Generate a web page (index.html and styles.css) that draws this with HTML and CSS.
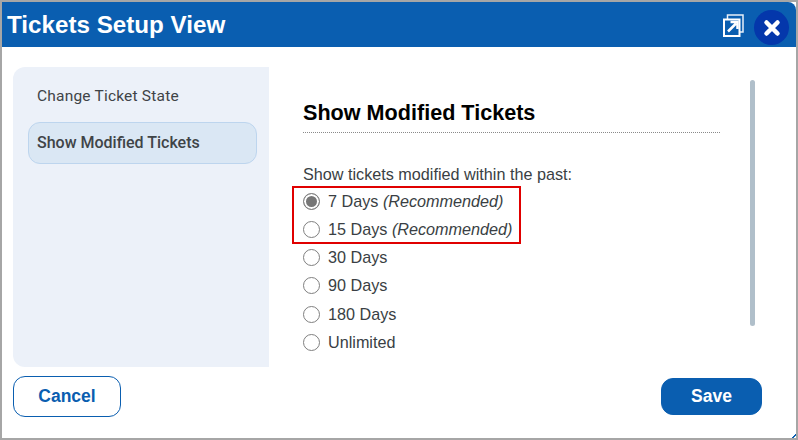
FILE: index.html
```html
<!DOCTYPE html>
<html lang="en">
  <head>
    <meta charset="UTF-8" />
    <meta name="viewport" content="width=device-width, initial-scale=1.0" />
    <link rel="stylesheet" href="styles.css">
    <title>Tickets Setup View</title>
  </head>
  <body>
    <div class="dialog">
      <!-- title bar -->
      <div class="dialog-header">
        <h1>Tickets Setup View</h1>
        <svg class="popout-icon" width="22" height="23" viewBox="0 0 22 23">
          <rect x="5.500" y="1" width="15.500" height="17" fill="none" stroke="#e8f0f8" stroke-width="1.500"/>
          <rect x="2" y="5.500" width="15.500" height="16.500" fill="#0a5eb0" stroke="#fff" stroke-width="2"/>
          <path d="M6 17.500L14 9.500M8.500 8H15.500V15" fill="none" stroke="#fff" stroke-width="2.500"/>
        </svg>
        <button class="close-btn">
          <svg width="18" height="18" viewBox="0 0 18 18">
            <path d="M3.500 3.500L14.500 14.500M14.500 3.500L3.500 14.500" stroke="#fff" stroke-width="4.500" stroke-linecap="round"/>
          </svg>
        </button>
      </div>

      <div class="dialog-body">
        <!-- side menu -->
        <div class="side-menu">
          <div class="menu-item">Change Ticket State</div>
          <div class="menu-item active">Show Modified Tickets</div>
        </div>

        <div class="panel">
          <div class="panel-content">
            <h2>Show Modified Tickets</h2>
            <p class="intro">Show tickets modified within the past:</p>
            <div class="highlight">
              <label class="option"><input type="radio" name="past" checked /> <span>7 Days <i>(Recommended)</i></span></label>
              <label class="option"><input type="radio" name="past" /> <span>15 Days <i>(Recommended)</i></span></label>
            </div>
            <label class="option"><input type="radio" name="past" /> <span>30 Days</span></label>
            <label class="option"><input type="radio" name="past" /> <span>90 Days</span></label>
            <label class="option"><input type="radio" name="past" /> <span>180 Days</span></label>
            <label class="option"><input type="radio" name="past" /> <span>Unlimited</span></label>
          </div>
          <div class="scroll-thumb"></div>
        </div>
      </div>

      <div class="dialog-footer">
        <button class="btn btn-cancel">Cancel</button>
        <button class="btn btn-save">Save</button>
      </div>
      <div class="resize-grip"></div>
    </div>
  </body>
</html>
```

FILE: styles.css
```css
* {
  box-sizing: border-box;
}

body {
  margin: 0;
  background-color: #fff;
  font-family: "Liberation Sans", Arial, sans-serif;
}

.dialog {
  position: relative;
  width: 798px;
  height: 440px;
  border: 2px solid #a6a6a6;
  background-color: #fff;
  overflow: hidden;
}

.dialog-header {
  height: 45px;
  background-color: #0a5eb0;
  border-top-right-radius: 8px;
  display: flex;
  align-items: center;
  padding-left: 5px;
  padding-right: 7px;
}

.dialog-header h1 {
  flex: 1;
  margin: 0;
  color: #fff;
  font-size: 24.200px;
  font-weight: bold;
}

.popout-icon {
  margin-right: 10px;
  margin-top: 2px;
}

.close-btn {
  width: 35px;
  height: 35px;
  margin-top: 6px;
  padding: 0;
  border: none;
  border-radius: 50%;
  background-color: #0437ab;
  display: flex;
  justify-content: center;
  align-items: center;
}

.dialog-body {
  height: 300px;
  margin-top: 20px;
  margin-left: 11px;
  display: flex;
}

.side-menu {
  width: 256px;
  padding: 12px 12px 0 15px;
  background-color: #ecf1f9;
  border-top-left-radius: 12px;
  border-bottom-left-radius: 12px;
  font-family: Roboto, sans-serif;
  font-size: 15.500px;
  color: #3f4447;
}

.menu-item {
  height: 33px;
  padding-left: 9px;
  line-height: 34px;
  letter-spacing: 0.2px;
}

.menu-item.active {
  height: 42px;
  margin-top: 10px;
  padding-left: 8px;
  line-height: 40px;
  font-size: 16px;
  font-weight: 500;
  letter-spacing: 0;
  background-color: #dae7f4;
  border: 1px solid #bdd5ee;
  border-radius: 12px;
}

.panel {
  flex: 1;
  display: flex;
  padding-left: 34px;
}

.panel-content {
  width: 417px;
  padding-top: 32px;
}

.panel-content h2 {
  margin: 0;
  height: 34px;
  color: #000;
  font-size: 21.600px;
  font-weight: bold;
  line-height: 28px;
  border-bottom: 1px dotted #8a8a8a;
}

.intro {
  margin: 31px 0 0 0;
  height: 22px;
  color: #3a3f44;
  font-size: 16.200px;
  line-height: 20px;
}

.highlight {
  width: 229px;
  height: 58px;
  margin-left: -11px;
  margin-bottom: -0.600px;
  padding-left: 9px;
  border: 2px solid #e00000;
  display: flex;
  flex-direction: column;
  gap: 2px;
}

.option {
  height: 28.400px;
  display: flex;
  align-items: center;
  gap: 8px;
  color: #3a3f44;
  font-size: 16.200px;
}

.highlight .option {
  height: 26px;
}

.option input {
  appearance: none;
  width: 17px;
  height: 17px;
  margin: 0;
  border: 1.500px solid #808080;
  border-radius: 50%;
  background-color: #fff;
}

.option input:checked {
  background-color: #777;
  box-shadow: inset 0 0 0 2px #fff;
}

.scroll-thumb {
  width: 5px;
  height: 246px;
  margin-top: 13px;
  margin-left: 30px;
  background-color: #b0bfca;
  border-radius: 3px;
}

.dialog-footer {
  margin-top: 9px;
  padding-left: 11px;
  padding-right: 34px;
  display: flex;
  justify-content: space-between;
  align-items: center;
}

.btn {
  font-family: "Liberation Sans", Arial, sans-serif;
  font-size: 17.500px;
  font-weight: bold;
  border-radius: 12px;
  border: 1px solid #0a5eb0;
}

.btn-cancel {
  width: 108px;
  height: 41px;
  background-color: #fff;
  color: #0a5eb0;
}

.btn-save {
  width: 101px;
  height: 37px;
  background-color: #0a5eb0;
  color: #fff;
}

.resize-grip {
  position: absolute;
  right: 0;
  bottom: 0;
  width: 5px;
  height: 5px;
  background: linear-gradient(135deg, transparent 55%, #0a5eb0 55%, #0a5eb0 75%, transparent 75%);
}
```
